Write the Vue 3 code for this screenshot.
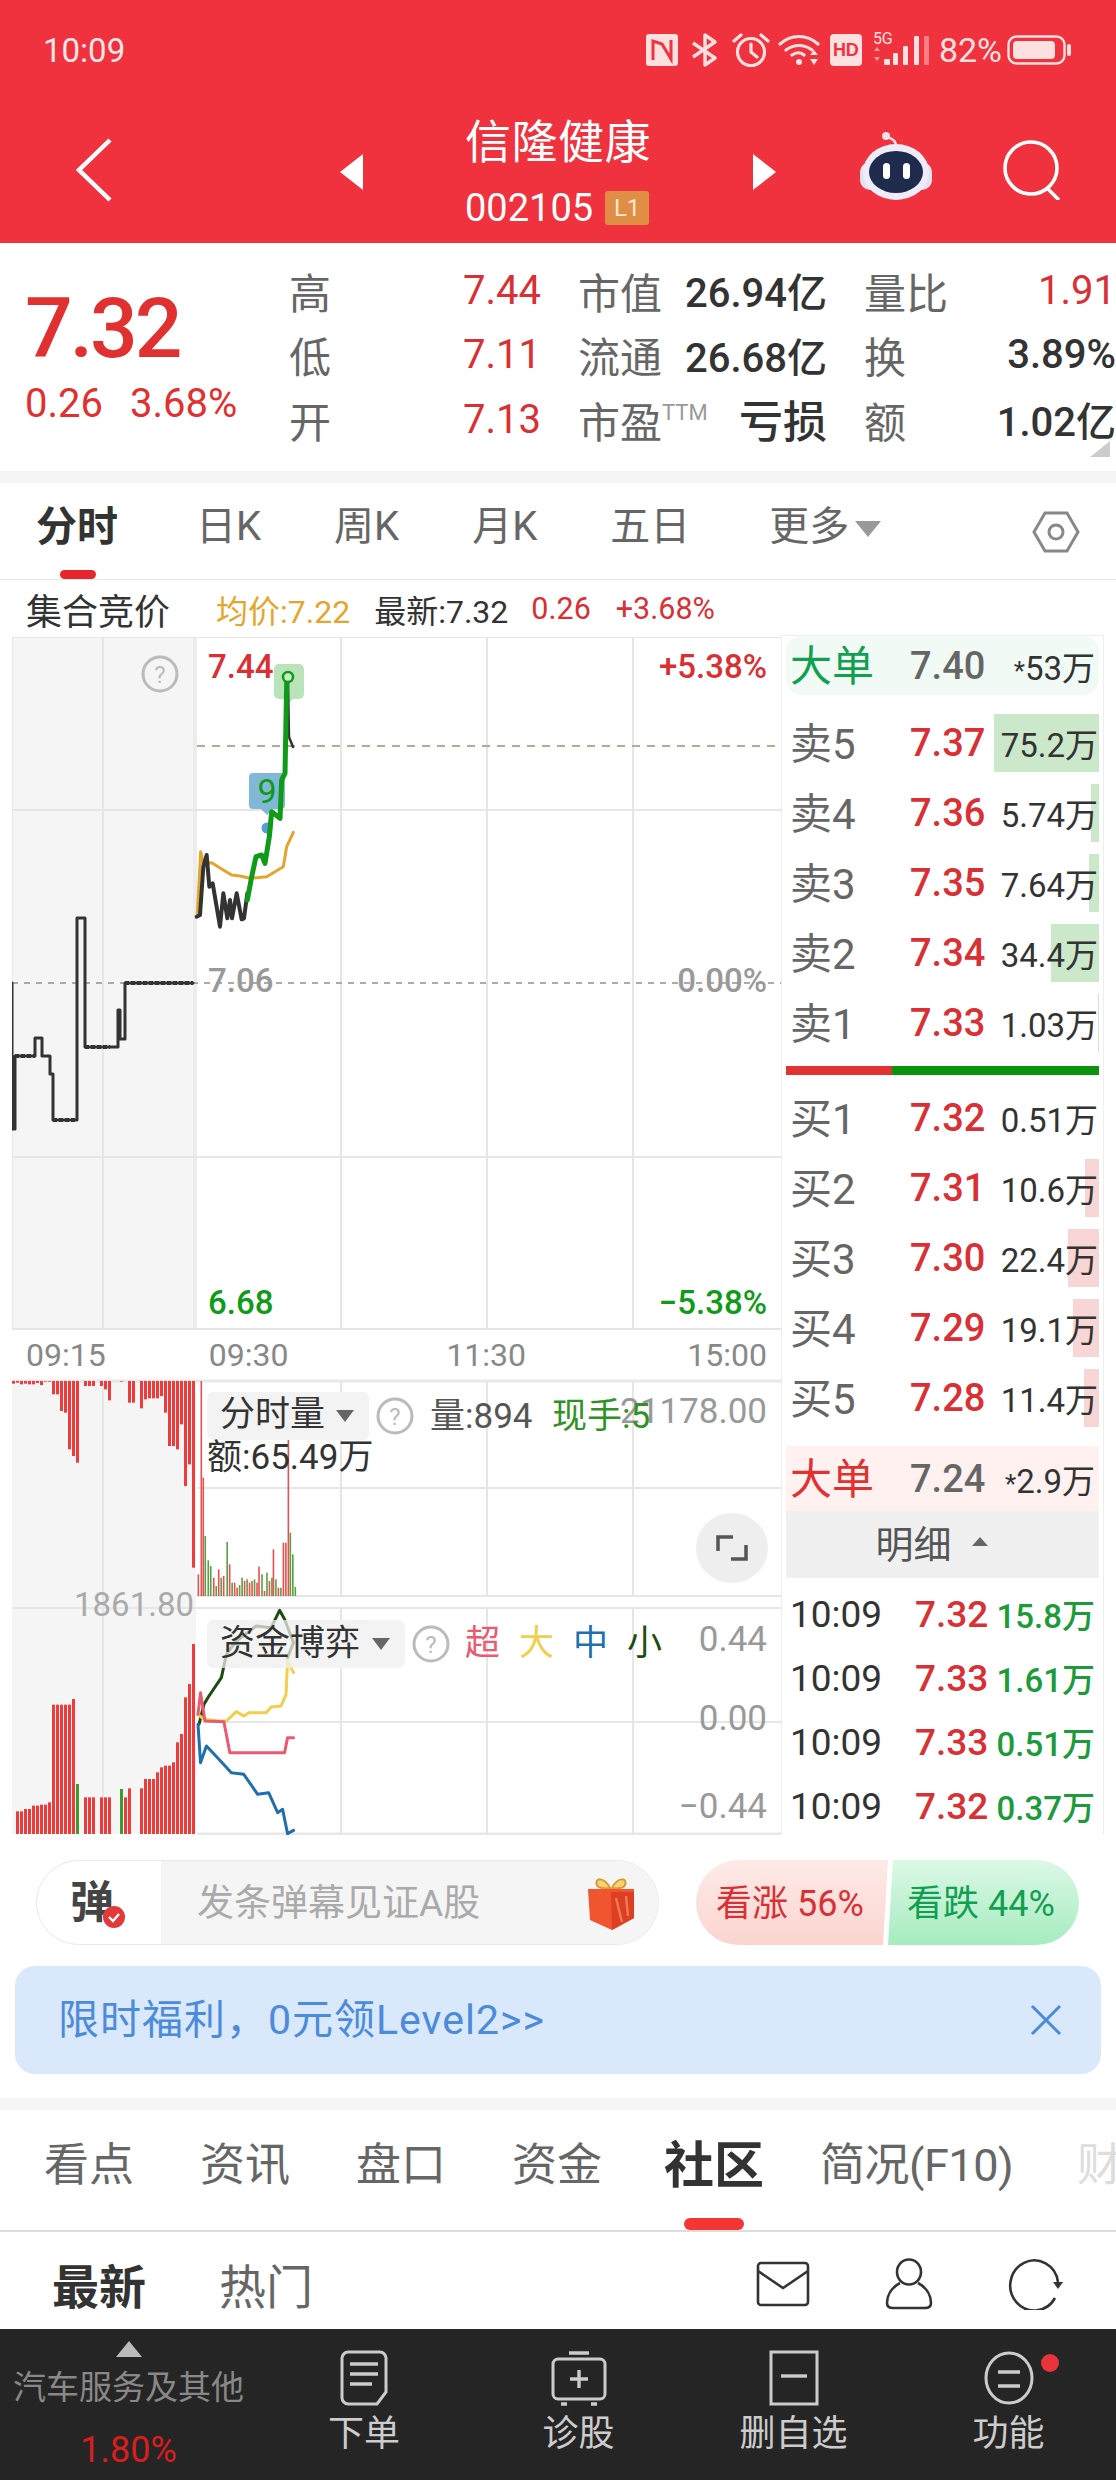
<template>
  <div class="page">
    <header class="header">
      <div class="status">
        <span class="clock">10:09</span>
        <div class="status-icons">
          <svg width="32" height="32" viewBox="0 0 32 32"><rect width="32" height="32" rx="3" fill="#ffe0e0"/><path d="M7 26V7l9 3 9 15V6" fill="none" stroke="#ef3340" stroke-width="3"/></svg>
          <svg class="ml-13" width="27" height="34" viewBox="0 0 27 34" fill="none" stroke="#ffe0e0" stroke-width="3.4" stroke-linejoin="round"><path d="M2 10l22 15-10 7V2l10 7L2 24"/></svg>
          <svg class="ml-13" width="40" height="36" viewBox="0 0 40 36" fill="none" stroke="#ffe0e0" stroke-width="3.2" stroke-linecap="round"><circle cx="20" cy="20" r="13.5"/><path d="M20 12v8l6 5M3 9l7-6M37 9l-7-6"/></svg>
          <svg class="ml-7" width="42" height="32" viewBox="0 0 42 32" fill="none" stroke="#ffe0e0" stroke-width="3.2" stroke-linecap="round"><path d="M2 10c11-10 27-10 38 0M8 16c8-6 18-6 26 0M14 21c4-3 9-3 12 0"/><circle cx="21" cy="28" r="3" fill="#ffe0e0" stroke="none"/><path d="M32 21l4-5 4 5zM32 25h8l-4 6z" fill="#ffe0e0" stroke="none"/></svg>
          <span class="hd">HD</span>
          <div class="signal">
            <span class="five-g">5G</span>
            <svg width="57" height="32" viewBox="0 0 57 32"><path d="M1 17l3-4 3 4zM1 23h6l-3 4z" fill="#ff9a9f"/><rect x="11" y="25" width="6" height="6" rx="1" fill="#ffe0e0"/><rect x="20" y="19" width="5" height="12" rx="1" fill="#ffe0e0"/><rect x="30" y="12" width="5" height="19" rx="1" fill="#ffe0e0"/><rect x="41" y="2" width="5" height="29" rx="1" fill="#ffe0e0"/><rect x="51" y="2" width="5" height="29" rx="1" fill="#ff7d84"/></svg>
          </div>
          <span class="battery-text">82%</span>
          <svg class="ml-5" width="64" height="30" viewBox="0 0 64 30"><rect x="1.5" y="1.5" width="56" height="27" rx="8" fill="none" stroke="#ffe0e0" stroke-width="2.4"/><rect x="6" y="6" width="42" height="18" rx="4" fill="#ffe0e0"/><rect x="60" y="9" width="4" height="12" rx="2" fill="#ffe0e0"/></svg>
        </div>
      </div>
      <div class="nav">
        <svg class="back" width="36" height="64" viewBox="0 0 36 64" fill="none" stroke="#fff" stroke-width="4.5"><path d="M34 2L3 32l31 30"/></svg>
        <i class="tri tri-left"></i>
        <div class="title">
          <div class="name">信隆健康</div>
          <div class="code-row"><span>002105</span><b>L1</b></div>
        </div>
        <i class="tri tri-right"></i>
        <svg class="robot" width="72" height="68" viewBox="0 0 72 68">
          <path d="M36 14c0-4-2-7-9-9" fill="none" stroke="#f3dfe6" stroke-width="2.5"/>
          <circle cx="26" cy="4" r="4" fill="#f3dfe6"/>
          <rect x="0" y="30" width="72" height="28" rx="10" fill="#e4e2f2"/>
          <ellipse cx="36" cy="40" rx="33" ry="28" fill="#eeecf8"/>
          <ellipse cx="36" cy="40" rx="27" ry="21" fill="#1f2b4c"/>
          <rect x="23" y="31" width="7" height="16" rx="3.5" fill="#fff"/>
          <rect x="43" y="31" width="7" height="16" rx="3.5" fill="#fff"/>
        </svg>
        <svg class="search" width="60" height="60" viewBox="0 0 60 60" fill="none" stroke="#fff" stroke-width="3.6"><circle cx="28" cy="28" r="26"/><path d="M44 48l12 12"/></svg>
      </div>
    </header>

    <section class="quote">
      <div class="price-box">
        <div class="big-price">7.32</div>
        <div class="change"><span>0.26</span><span>3.68%</span></div>
      </div>
      <div class="stats">
        <div v-for="s in stats" :key="s.label" class="stat">
          <span class="stat-label">{{ s.label }}<sup v-if="s.sup">{{ s.sup }}</sup></span>
          <span class="stat-value" :class="{ red: s.red, word: s.sup }">{{ s.value }}</span>
        </div>
      </div>
      <i class="corner"></i>
    </section>
    <div class="strip"></div>

    <nav class="period-tabs">
      <span v-for="t in periods" :key="t" class="period" :class="{ active: t === '分时' }">{{ t }}</span>
      <span class="period more">更多<i class="more-caret"></i></span>
      <svg class="hex" width="48" height="44" viewBox="0 0 48 44" fill="none" stroke="#888" stroke-width="3"><path d="M13 3h22l11 19-11 19H13L2 22z"/><circle cx="24" cy="22" r="7"/></svg>
    </nav>

    <div class="market">
      <div class="charts">
        <div class="info-row">
          <span class="info-title">集合竞价</span>
          <span class="gold">均价:7.22</span>
          <span class="latest">最新:7.32</span>
          <span class="rise">0.26</span>
          <span class="rise pct">+3.68%</span>
        </div>

        <svg class="price-chart" width="769" height="693" viewBox="12 637 769 693">
          <rect x="12" y="637" width="183" height="693" fill="#f5f5f5"/>
          <rect x="193" y="637" width="4" height="693" fill="#ececec"/>
          <path class="grid" d="M12 637H781M12 810H781M12 1157H781M12 1329H781M12 637V1330M103 637V1330M341 637V1330M487 637V1330M633 637V1330"/>
          <path d="M197 746H781" stroke="#bda987" stroke-width="2" stroke-dasharray="8 7"/>
          <path d="M12 983H781" stroke="#aaa" stroke-width="2" stroke-dasharray="6 6"/>
          <polyline class="line dark step" points="12,983 12,1129 15,1129 15,1056 35,1056 35,1038 42,1038 42,1056 50,1056 50,1074 53,1074 53,1120 77,1120 77,918 85,918 85,1047 118,1047 118,1010 120,1010 120,1039 125,1039 125,983 193,983"/>
          <path d="M125 983H193M15 1056H35M53 1120H77M85 1047H110" stroke="#333" stroke-width="4" stroke-dasharray="4 2"/>

          <circle cx="160" cy="674" r="17" fill="none" stroke="#bbb" stroke-width="3"/>
          <text class="help" x="160" y="675">?</text>

          <rect x="274" y="664" width="30" height="35" rx="5" fill="#b9e3b9"/>
          <path d="M283 699h10l-5 5z" fill="#b9e3b9"/>
          <rect x="249" y="773" width="36" height="36" rx="4" fill="#6aaccf" opacity=".85"/>
          <path d="M261 809h12l-6 6z" fill="#6aaccf" opacity=".85"/>
          <circle cx="267" cy="828" r="5.5" fill="#5b9bd8"/>
          <polyline class="line gold-line" :points="avgLine"/>
          <polyline class="line dark" :points="priceDark"/>
          <polyline class="line dark thin" points="288,683 289,737 293,747"/>
          <polyline class="line green-line" :points="priceGreen"/>
          <circle cx="288" cy="677" r="5" fill="#c9ecc9" stroke="#0f9a18" stroke-width="2.5"/>
          <text class="nine" x="267" y="791">9</text>

          <text class="axis red-fill" x="208" y="666">7.44</text>
          <text class="axis red-fill end" x="767" y="666">+5.38%</text>
          <text class="axis gray-fill" x="208" y="980">7.06</text>
          <text class="axis gray-fill end" x="767" y="980">0.00%</text>
          <text class="axis green-fill" x="208" y="1302">6.68</text>
          <text class="axis green-fill end" x="767" y="1302">−5.38%</text>
        </svg>

        <div class="time-axis"><span>09:15</span><span>09:30</span><span>11:30</span><span>15:00</span></div>

        <svg class="lower-chart" width="769" height="456" viewBox="12 1378 769 456">
          <rect x="12" y="1380" width="184" height="453" fill="#f5f5f5"/>
          <path class="grid" d="M197 1487H781M12 1607H781M197 1595H781M197 1721H781M103 1380V1833M341 1380V1595M487 1380V1595M633 1380V1595M341 1608V1833M487 1608V1833M633 1608V1833"/>
          <path d="M12 1380H781M197 1833H781" stroke="#e8e8e8" stroke-width="3"/>
          <rect v-for="b in hangBars" :key="b.x" :x="b.x" y="1380" width="3" :height="b.h" fill="#ee3b3b"/>
          <rect v-for="b in riseBars" :key="b.x" :x="b.x" :y="1833 - b.h" width="3" :height="b.h" :fill="b.up ? '#ee3b3b' : '#3f9a2f'"/>
          <rect v-for="b in dayBars" :key="b.x" :x="b.x" :y="b.y" width="1.6" :height="1595 - b.y" :fill="b.up ? '#e85050' : '#5b9e45'"/>
          <rect class="chip" x="207" y="1391" width="162" height="48" rx="7"/>
          <rect class="chip" x="207" y="1619" width="198" height="48" rx="7"/>
          <polyline class="line flow" stroke="#1d4d0e" :points="flowSmall"/>
          <polyline class="line flow" stroke="#f2cf4a" :points="flowBig"/>
          <polyline class="line flow" stroke="#ea5a70" :points="flowSuper"/>
          <polyline class="line flow" stroke="#1f6fb0" :points="flowMid"/>
          <rect class="chip-top" x="207" y="1391" width="162" height="48" rx="7"/>
          <rect class="chip-top" x="207" y="1619" width="198" height="48" rx="7"/>

          <text class="label dark-fill" x="220" y="1413">分时量</text>
          <path d="M336 1409h18l-9 12z" fill="#666"/>
          <circle cx="395" cy="1415" r="17" fill="none" stroke="#bbb" stroke-width="3"/>
          <text class="help" x="395" y="1416">?</text>
          <text class="label mid-fill" x="430" y="1415">量:894</text>
          <text class="label gray-fill end" x="767" y="1410">21178.00</text>
          <text class="label vol-green" x="552" y="1415">现手:5</text>
          <text class="label dark-fill" x="207" y="1456">额:65.49万</text>

          <ellipse cx="732" cy="1547" rx="36" ry="35" fill="#eee"/>
          <path d="M718 1550v-14h15M746 1544v14h-15" fill="none" stroke="#555" stroke-width="3.5"/>

          <text class="label light-fill end narrow" x="194" y="1603">1861.80</text>

          <text class="label dark-fill" x="220" y="1642">资金博弈</text>
          <path d="M372 1637h18l-9 12z" fill="#666"/>
          <circle cx="431" cy="1643" r="17" fill="none" stroke="#bbb" stroke-width="3"/>
          <text class="help" x="431" y="1644">?</text>
          <text class="label" fill="#ea5a70" x="465" y="1642">超</text>
          <text class="label" fill="#f2cf4a" x="519" y="1642">大</text>
          <text class="label" fill="#1f6fb0" x="573" y="1642">中</text>
          <text class="label" fill="#1d4d0e" x="627" y="1642">小</text>
          <text class="label gray-fill end" x="767" y="1638">0.44</text>
          <text class="label gray-fill end" x="767" y="1717">0.00</text>
          <text class="label gray-fill end" x="767" y="1805">−0.44</text>
        </svg>
      </div>

      <aside class="book">
        <div class="big-order buy-side"><span class="bo-label">大单</span><span class="bo-price">7.40</span><span class="vol"><em>*</em>53万</span></div>
        <div class="levels">
          <div v-for="r in sells" :key="r.label" class="level">
            <i class="depth sell-depth" :style="{ width: r.bar + 'px' }"></i>
            <span class="lv-label">{{ r.label }}</span><span class="lv-price">{{ r.price }}</span><span class="vol">{{ r.vol }}</span>
          </div>
        </div>
        <div class="split"><i></i><b></b></div>
        <div class="levels">
          <div v-for="r in buys" :key="r.label" class="level">
            <i class="depth buy-depth" :style="{ width: r.bar + 'px' }"></i>
            <span class="lv-label">{{ r.label }}</span><span class="lv-price">{{ r.price }}</span><span class="vol">{{ r.vol }}</span>
          </div>
        </div>
        <div class="big-order sell-side"><span class="bo-label">大单</span><span class="bo-price">7.24</span><span class="vol"><em>*</em>2.9万</span></div>
        <div class="detail-head">明细<i></i></div>
        <div v-for="(d, i) in details" :key="i" class="detail">
          <span class="d-time">10:09</span><span class="d-price">{{ d.price }}</span><span class="d-vol">{{ d.vol }}</span>
        </div>
      </aside>
    </div>

    <div class="action-row">
      <div class="danmu">
        <div class="danmu-tag">
          <span>弹</span>
          <svg width="22" height="22" viewBox="0 0 22 22"><circle cx="11" cy="11" r="11" fill="#e23a3a"/><path d="M6 11l4 4 6-7" fill="none" stroke="#fff" stroke-width="2.4"/></svg>
        </div>
        <div class="danmu-input">
          <span>发条弹幕见证A股</span>
          <svg width="50" height="54" viewBox="0 0 50 54">
            <path d="M24 12C18 0 8 2 11 9c1 3 7 4 13 3zM26 12C32 0 42 2 39 9c-1 3-7 4-13 3z" fill="#f6d27a" stroke="#d99a2e" stroke-width="2"/>
            <path d="M2 13h46v29L26 54 4 44z" fill="#f0552f"/>
            <path d="M25 16h23v26L26 54z" fill="#dd3f22"/>
            <path d="M30 22l6 24M40 20l2 20" stroke="#f27a52" stroke-width="2.4"/>
          </svg>
        </div>
      </div>
      <div class="sentiment">
        <span class="bull">看涨 56%</span>
        <span class="bear">看跌 44%</span>
      </div>
    </div>

    <div class="banner">
      <span>限时福利，0元领Level2&gt;&gt;</span>
      <svg width="32" height="32" viewBox="0 0 32 32" stroke="#4c8bdc" stroke-width="3"><path d="M2 2l28 28M30 2L2 30"/></svg>
    </div>
    <div class="strip gap-strip"></div>

    <nav class="info-tabs">
      <span v-for="t in infoTabs" :key="t" class="info-tab" :class="{ active: t === '社区' }">{{ t }}</span>
      <span class="info-tab faded">财</span>
    </nav>

    <div class="sub-tabs">
      <span class="sub active">最新</span>
      <span class="sub">热门</span>
      <div class="sub-icons">
        <svg width="54" height="46" viewBox="0 0 54 46" fill="none" stroke="#333" stroke-width="2.6"><rect x="2" y="2" width="50" height="42" rx="3"/><path d="M2 10l25 17 25-17"/></svg>
        <svg width="48" height="52" viewBox="0 0 48 52" fill="none" stroke="#333" stroke-width="2.6"><ellipse cx="24" cy="14" rx="12" ry="12.5"/><path d="M15 25C6 30 2 38 2 45c0 4 3 5 6 5h32c3 0 6-1 6-5 0-7-4-15-13-20"/></svg>
        <svg width="56" height="52" viewBox="0 0 56 52" fill="none" stroke="#333" stroke-width="2.6"><path d="M47 40A24 25 0 1 1 50 24"/><path d="M45 24h10l-5 7z" fill="#333" stroke="none"/></svg>
      </div>
    </div>

    <footer class="bottom">
      <div class="sector">
        <i class="up-tri"></i>
        <span class="sector-name">汽车服务及其他</span>
        <span class="sector-pct">1.80%</span>
      </div>
      <div class="bottom-btn">
        <svg width="48" height="56" viewBox="0 0 48 56" fill="none" stroke="#ccc" stroke-width="3"><path d="M8 2h32c3 0 6 3 6 6v34l-9 12H8c-3 0-6-3-6-6V8c0-3 3-6 6-6z"/><path d="M10 14h28M10 24h28M10 34h22" stroke-width="3.4"/></svg>
        <span>下单</span>
      </div>
      <div class="bottom-btn">
        <svg width="58" height="56" viewBox="0 0 58 56" fill="none" stroke="#ccc" stroke-width="3"><rect x="3" y="9" width="52" height="40" rx="5"/><path d="M19 3h20M29 20v18M20 29h18M11 54h6M41 54h6" stroke-width="3.4"/></svg>
        <span>诊股</span>
      </div>
      <div class="bottom-btn">
        <svg width="50" height="56" viewBox="0 0 50 56" fill="none" stroke="#ccc" stroke-width="3"><rect x="2" y="2" width="46" height="52"/><path d="M12 26h26" stroke-width="3.4"/></svg>
        <span>删自选</span>
      </div>
      <div class="bottom-btn fn">
        <svg width="52" height="56" viewBox="0 0 52 56" fill="none" stroke="#ccc" stroke-width="3"><ellipse cx="26" cy="28" rx="23" ry="25"/><path d="M15 22h22M15 36h22" stroke-width="3.4"/></svg>
        <i class="dot"></i>
        <span>功能</span>
      </div>
    </footer>
  </div>
</template>

<script setup>
const stats = [
  { label: "高", value: "7.44", red: true },
  { label: "市值", value: "26.94亿" },
  { label: "量比", value: "1.91", red: true },
  { label: "低", value: "7.11", red: true },
  { label: "流通", value: "26.68亿" },
  { label: "换", value: "3.89%" },
  { label: "开", value: "7.13", red: true },
  { label: "市盈", sup: "TTM", value: "亏损" },
  { label: "额", value: "1.02亿" },
];

const periods = ["分时", "日K", "周K", "月K", "五日"];
const infoTabs = ["看点", "资讯", "盘口", "资金", "社区", "简况(F10)"];

const sells = [
  { label: "卖5", price: "7.37", vol: "75.2万", bar: 105 },
  { label: "卖4", price: "7.36", vol: "5.74万", bar: 8 },
  { label: "卖3", price: "7.35", vol: "7.64万", bar: 10 },
  { label: "卖2", price: "7.34", vol: "34.4万", bar: 48 },
  { label: "卖1", price: "7.33", vol: "1.03万", bar: 1 },
];
const buys = [
  { label: "买1", price: "7.32", vol: "0.51万", bar: 0 },
  { label: "买2", price: "7.31", vol: "10.6万", bar: 14 },
  { label: "买3", price: "7.30", vol: "22.4万", bar: 31 },
  { label: "买4", price: "7.29", vol: "19.1万", bar: 26 },
  { label: "买5", price: "7.28", vol: "11.4万", bar: 15 },
];
const details = [
  { price: "7.32", vol: "15.8万" },
  { price: "7.33", vol: "1.61万" },
  { price: "7.33", vol: "0.51万" },
  { price: "7.32", vol: "0.37万" },
];

// price lines, read off the 3x crop of the chart
const fromCrop = (pts) => pts.map(([x, y]) => `${170 + x / 3},${640 + y / 3}`).join(" ");
const priceDark = fromCrop([[80,830],[90,825],[100,680],[110,645],[118,740],[128,730],[150,860],[160,760],[172,835],[180,780],[186,835],[200,760],[215,838],[222,835],[232,760]]);
const priceGreen = fromCrop([[232,780],[245,710],[258,650],[275,645],[285,670],[298,590],[305,515],[330,535],[335,420],[345,400],[350,130],[355,110]]);
const avgLine = fromCrop([[82,820],[92,635],[100,670],[125,668],[160,690],[185,705],[210,708],[240,715],[290,710],[340,680],[350,620],[370,577]]);

// lower chart values are in crop units too
const low = (pts) => pts.map(([x, y]) => `${x / 2.01},${1360 + y / 3}`).join(" ");
const flowSmall = low([[400,1090],[410,1030],[420,1005],[445,950],[455,880],[475,840],[515,795],[545,800],[562,748],[572,775],[590,845],[578,890]]);
const flowBig = low([[398,1060],[410,1075],[440,1080],[455,1080],[475,1052],[490,1065],[500,1055],[535,1055],[545,1038],[565,1035],[575,1000],[578,900],[590,935]]);
const flowSuper = low([[398,1060],[403,995],[412,1080],[450,1082],[462,1175],[572,1175],[578,1130],[590,1130]]);
const flowMid = low([[398,1090],[403,1205],[415,1155],[440,1195],[465,1235],[490,1240],[518,1300],[540,1295],[558,1355],[568,1345],[578,1418],[590,1408]]);

const hangBars = [68,65,70,68,70,70,66,72,62,62,100,100,150,155,265,285,305,60,75,75,75,60,75,85,118,60,60,62,60,125,125,60,142,115,112,112,112,105,155,255,255,265,190,375,310,620]
  .map((bottom, i) => ({ x: 12 + i * 4, h: (bottom - 60) / 3 }));

const riseBars = [1420,1352,1352,1345,1345,1335,1335,1332,1332,1325,1032,1032,1032,1032,1032,1015,1270,1420,1310,1310,1310,1420,1310,1310,1310,1420,1420,1285,1310,1283,1420,1420,1283,1255,1255,1255,1235,1220,1215,1215,1205,1145,1120,1010,970,850]
  .map((top, i) => ({ x: 12 + i * 4, h: (1420 - top) / 3, up: i !== 16 && i !== 27 }));

const dayBars = [[397,640,1],[403,60,1],[407,350,1],[411,525,0],[417,598,0],[422,615,0],[428,650,1],[433,675,0],[438,625,1],[443,650,0],[448,645,1],[455,543,0],[460,610,1],[465,665,0],[470,665,1],[475,680,1],[480,672,0],[485,650,0],[490,660,1],[495,655,0],[500,665,1],[505,660,1],[510,655,0],[515,665,1],[519,617,1],[525,640,0],[530,690,1],[535,635,0],[540,660,1],[545,650,0],[548,565,1],[553,655,0],[558,680,1],[563,680,0],[568,545,1],[573,545,1],[578,150,1],[582,515,0],[587,580,0],[592,678,0]]
  .map(([x, top, up]) => ({ x: x / 2.01, y: 1360 + top / 3, up }));
</script>

<style>
html, body { margin: 0; background: #fff; }
</style>

<style scoped>
.page {
  width: 1116px;
  font-family: Roboto, "Noto Sans CJK SC", sans-serif;
  color: #333;
  background: #fff;
  overflow: hidden;
}
i, em { font-style: normal; }

.header { height: 243px; background: #ef323d; color: #fff; }
.status { height: 100px; display: flex; align-items: center; justify-content: space-between; padding: 0 45px 0 43px; box-sizing: border-box; }
.clock { font-size: 33px; color: #ffe6e6; }
.status-icons { display: flex; align-items: center; }
.ml-13 { margin-left: 13px; }
.ml-7 { margin-left: 7px; }
.ml-5 { margin-left: 5px; }
.hd { margin-left: 10px; width: 32px; height: 32px; border-radius: 4px; background: #ffe0e0; color: #ef323d; font: 700 18px/32px "Liberation Sans", sans-serif; text-align: center; }
.signal { position: relative; margin-left: 11px; }
.signal svg { display: block; }
.five-g { position: absolute; left: 0; top: -4px; font-size: 16px; line-height: 18px; color: #ffe0e0; }
.battery-text { margin-left: 9px; font-size: 34px; color: #ffe0e0; }

.nav { height: 143px; display: flex; align-items: center; padding-left: 76px; position: relative; }
.back { margin-top: -4px; }
.tri { width: 0; height: 0; border-top: 18px solid transparent; border-bottom: 18px solid transparent; }
.tri-left { margin-left: 228px; border-right: 23px solid #fff; }
.tri-right { margin-left: 101px; border-left: 23px solid #fff; }
.title { margin-left: 102px; width: 187px; margin-top: -2px; }
.name { font-size: 46px; line-height: 62px; letter-spacing: .5px; white-space: nowrap; }
.code-row { display: flex; align-items: center; font-size: 38px; line-height: 44px; margin-top: 13px; }
.code-row b { margin-left: 12px; width: 44px; height: 34px; background: #e08d45; border-radius: 3px; font-size: 24px; font-weight: 400; line-height: 34px; text-align: center; color: #ffe9d2; }
.robot { margin-left: 84px; margin-top: -12px; }
.search { margin-left: 71px; margin-top: -4px; }

.quote { position: relative; height: 228px; display: flex; }
.price-box { width: 290px; padding-left: 25px; box-sizing: border-box; color: #e0302f; }
.big-price { font-size: 84px; font-weight: 500; letter-spacing: -3px; line-height: 100px; margin-top: 36px; }
.change { display: flex; gap: 27px; font-size: 40px; line-height: 46px; margin-top: 2px; }
.stats { margin-top: 15px; display: grid; grid-template-columns: 251px 248px 251px; column-gap: 38px; grid-auto-rows: 64.5px; }
.stat { display: flex; justify-content: space-between; align-items: center; white-space: nowrap; }
.stat-label { font-size: 42px; color: #666; position: relative; margin-left: -1px; }
.stat-label sup { font-size: 22px; color: #999; position: absolute; top: 9px; left: 84px; line-height: 30px; }
.stat-value { font-size: 40px; font-weight: 500; color: #333; }
.stat-value.red { color: #d93035; font-weight: 400; }
.stat-value.word { font-size: 44px; }
.corner { position: absolute; right: 6px; bottom: 14px; width: 0; height: 0; border-left: 20px solid transparent; border-bottom: 16px solid #ccc; }
.strip { height: 12px; background: #f5f5f5; }

.period-tabs { position: relative; height: 88px; padding: 0 0 8px 36px; border-bottom: 1px solid #e6e6e6; display: flex; align-items: center; gap: 73px; box-sizing: content-box; }
.period { font-size: 40px; line-height: 56px; color: #666; position: relative; white-space: nowrap; }
.period.active { font-size: 41px; font-weight: 700; color: #333; margin-right: 5px; }
.period.active::after { content: ""; position: absolute; left: 24px; right: 22px; top: 71px; height: 9px; border-radius: 5px; background: #e5272d; }
.more { margin-left: 6px; }
.more-caret { display: inline-block; margin-left: 6px; vertical-align: 3px; border-left: 13px solid transparent; border-right: 13px solid transparent; border-top: 16px solid #999; }
.hex { position: absolute; left: 1032px; top: 27px; }

.market { display: flex; }
.charts { width: 769px; margin-left: 12px; flex: none; }
.info-row { height: 57px; display: flex; align-items: center; font-size: 32px; white-space: nowrap; margin-left: -12px; }
.info-title { margin-left: 26px; font-size: 36px; color: #333; }
.gold { margin-left: 46px; color: #e5a52d; }
.latest { margin-left: 24px; color: #333; }
.rise { margin-left: 23px; font-size: 30.5px; color: #d93035; }
.rise.pct { margin-left: 25px; }
.price-chart, .lower-chart { display: block; font-family: Roboto, "Noto Sans CJK SC", sans-serif; }
.grid { stroke: #e6e6e6; stroke-width: 2; fill: none; }
.line { fill: none; stroke-width: 4; stroke-linejoin: round; stroke-linecap: round; }
.dark { stroke: #333; }
.step { stroke-width: 3; }
.thin { stroke-width: 2.5; }
.green-line { stroke: #0f9a18; stroke-width: 5; }
.gold-line { stroke: #e5a52d; stroke-width: 3; }
.flow { stroke-width: 3; }
text { dominant-baseline: central; }
.end { text-anchor: end; }
.help { font-size: 24px; fill: #bbb; text-anchor: middle; }
.nine { font-size: 34px; fill: #0f9a18; text-anchor: middle; }
.axis { font-size: 33px; font-weight: 500; }
.red-fill { fill: #d93035; }
.gray-fill { fill: #999; }
.green-fill { fill: #0f9a18; }
.time-axis { height: 49px; display: flex; align-items: center; font-size: 32px; color: #888; position: relative; margin-left: 14px; padding-right: 14px; }
.time-axis span:nth-child(2) { margin-left: 103px; }
.time-axis span:nth-child(3) { margin-left: 158px; }
.time-axis span:nth-child(4) { margin-left: auto; }
.chip { fill: #f2f2f2; }
.chip-top { fill: #f2f2f2; opacity: .72; }
.label { font-size: 35px; }
.narrow { font-size: 33px; }
.dark-fill { fill: #333; }
.mid-fill { fill: #555; }
.light-fill { fill: #aaa; }
.vol-green { fill: #2f9324; }

.book { width: 323px; margin-left: 0; margin-top: 55px; height: 1199px; box-sizing: border-box; padding: 0 4px; border: 1px solid #eee; border-bottom: 0; flex: none; }
.big-order { display: flex; align-items: center; padding: 0 4px; white-space: nowrap; }
.buy-side { height: 59px; background: #f1faf5; border-radius: 16px; }
.sell-side { height: 65px; margin-top: 19px; background: #fff1f0; }
.bo-label { width: 120px; font-size: 42px; margin-bottom: 6px; }
.buy-side .bo-label { color: #12a050; }
.sell-side .bo-label { color: #e0302f; }
.bo-price { font-size: 38px; font-weight: 500; color: #666; }
.vol { margin-left: auto; font-size: 33px; color: #333; position: relative; }
.vol em { font-size: 26px; }
.levels { margin-top: 19px; display: flex; flex-direction: column; gap: 12px; }
.split + .levels { margin-top: 14px; }
.level { position: relative; height: 58px; display: flex; align-items: center; padding: 0 1px 0 4px; white-space: nowrap; }
.depth { position: absolute; right: 0; top: 0; bottom: 0; }
.sell-depth { background: #cbe8cb; }
.buy-depth { background: #f9d6d6; }
.lv-label { position: relative; width: 120px; font-size: 42px; color: #666; margin-bottom: 6px; }
.lv-price { position: relative; font-size: 38px; font-weight: 500; color: #d93035; }
.split { display: flex; height: 9px; margin-top: 14px; }
.split i { width: 106px; background: #e23333; }
.split b { flex: 1; background: #0c930c; }
.detail-head { height: 61px; padding: 0 22px 6px 0; margin-bottom: 4px; background: #f0f0f0; display: flex; align-items: center; justify-content: center; font-size: 38px; color: #555; }
.detail-head i { margin-left: 20px; border-left: 8px solid transparent; border-right: 8px solid transparent; border-bottom: 9px solid #666; }
.detail { height: 64px; display: flex; align-items: center; padding: 0 4px; white-space: nowrap; }
.d-time { width: 125px; font-size: 37px; color: #333; }
.d-price { font-size: 37px; font-weight: 500; color: #d93035; }
.d-vol { margin-left: auto; font-size: 33px; font-weight: 500; color: #1c9a3c; }

.action-row { display: flex; margin-top: 25px; padding-left: 36px; }
.danmu { width: 623px; height: 85px; display: flex; border: 1px solid #e8e8e8; border-radius: 43px; overflow: hidden; box-sizing: border-box; }
.danmu-tag { position: relative; width: 124px; display: flex; align-items: center; font-size: 44px; font-weight: 700; color: #444; flex: none; padding-left: 33px; box-sizing: border-box; }
.danmu-tag span { margin-bottom: 8px; }
.danmu-tag svg { position: absolute; left: 66px; top: 45px; }
.danmu-input { flex: 1; background: #f5f5f5; display: flex; align-items: center; justify-content: space-between; padding: 0 22px 0 36px; font-size: 37px; color: #aaa; white-space: nowrap; }
.danmu-input span { margin-bottom: 6px; }
.sentiment { width: 383px; height: 85px; margin-left: 37px; display: flex; border-radius: 43px; overflow: hidden; font-size: 36px; white-space: nowrap; }
.bull, .bear { display: flex; align-items: center; padding-bottom: 6px; box-sizing: border-box; }
.bull { width: 192px; padding-left: 20px; background: linear-gradient(#fdeae7, #fbd5d0); color: #d93035; clip-path: polygon(0 0, 100% 0, calc(100% - 5px) 100%, 0 100%); }
.bear { flex: 1; margin-left: 0; padding-left: 19px; background: linear-gradient(#dcf8e6, #a6ecc0); color: #12a050; clip-path: polygon(5px 0, 100% 0, 100% 100%, 0 100%); }
.banner { margin: 21px 0 0 15px; width: 1086px; height: 108px; box-sizing: border-box; padding: 0 39px 0 43px; background: #d9e8fb; border-radius: 20px; display: flex; align-items: center; justify-content: space-between; font-size: 41px; letter-spacing: 1px; color: #4c8bdc; }
.banner span { margin-bottom: 8px; }
.gap-strip { margin-top: 24px; }

.info-tabs { height: 112px; padding: 0 0 8px 44px; border-bottom: 2px solid #ddd; display: flex; align-items: center; gap: 66px; white-space: nowrap; overflow: hidden; }
.info-tab { position: relative; font-size: 45px; line-height: 60px; color: #666; }
.info-tab.active { font-size: 50px; font-weight: 700; color: #333; margin: 0 -10px 0 -4px; }
.info-tab.active::after { content: ""; position: absolute; left: 20px; right: 20px; top: 82px; height: 12px; border-radius: 6px; background: #f33535; }
.info-tab:nth-child(6) { letter-spacing: -.5px; }
.faded { color: #ddd; margin-left: -2px; }
.sub-tabs { height: 91px; padding: 6px 0 0 52px; display: flex; align-items: center; }
.sub { font-size: 47px; color: #666; margin-right: 73px; }
.sub.active { font-weight: 700; color: #333; }
.sub-icons { margin-left: auto; display: flex; align-items: center; gap: 75px; padding-right: 52px; }

.bottom { height: 153px; background: #252525; display: flex; color: #ccc; }
.sector { width: 257px; flex: none; display: flex; flex-direction: column; align-items: center; }
.up-tri { margin-top: 12px; border-left: 13px solid transparent; border-right: 13px solid transparent; border-bottom: 16px solid #bbb; }
.sector-name { font-size: 33px; color: #888; margin-top: 8px; line-height: 46px; white-space: nowrap; }
.sector-pct { font-size: 36px; color: #d81e1e; margin-top: 17px; line-height: 44px; }
.bottom-btn { position: relative; flex: 1; display: flex; flex-direction: column; align-items: center; padding-top: 21px; font-size: 36px; line-height: 44px; white-space: nowrap; }
.bottom-btn span { margin-top: 6px; }
.bottom .bottom-btn:nth-child(2) { flex: none; width: 214px; }
.bottom .bottom-btn:nth-child(3), .bottom .bottom-btn:nth-child(4), .bottom .bottom-btn:nth-child(5) { flex: none; width: 215px; }
.dot { position: absolute; left: 140px; top: 25px; width: 18px; height: 18px; border-radius: 50%; background: #e8353b; }
</style>
